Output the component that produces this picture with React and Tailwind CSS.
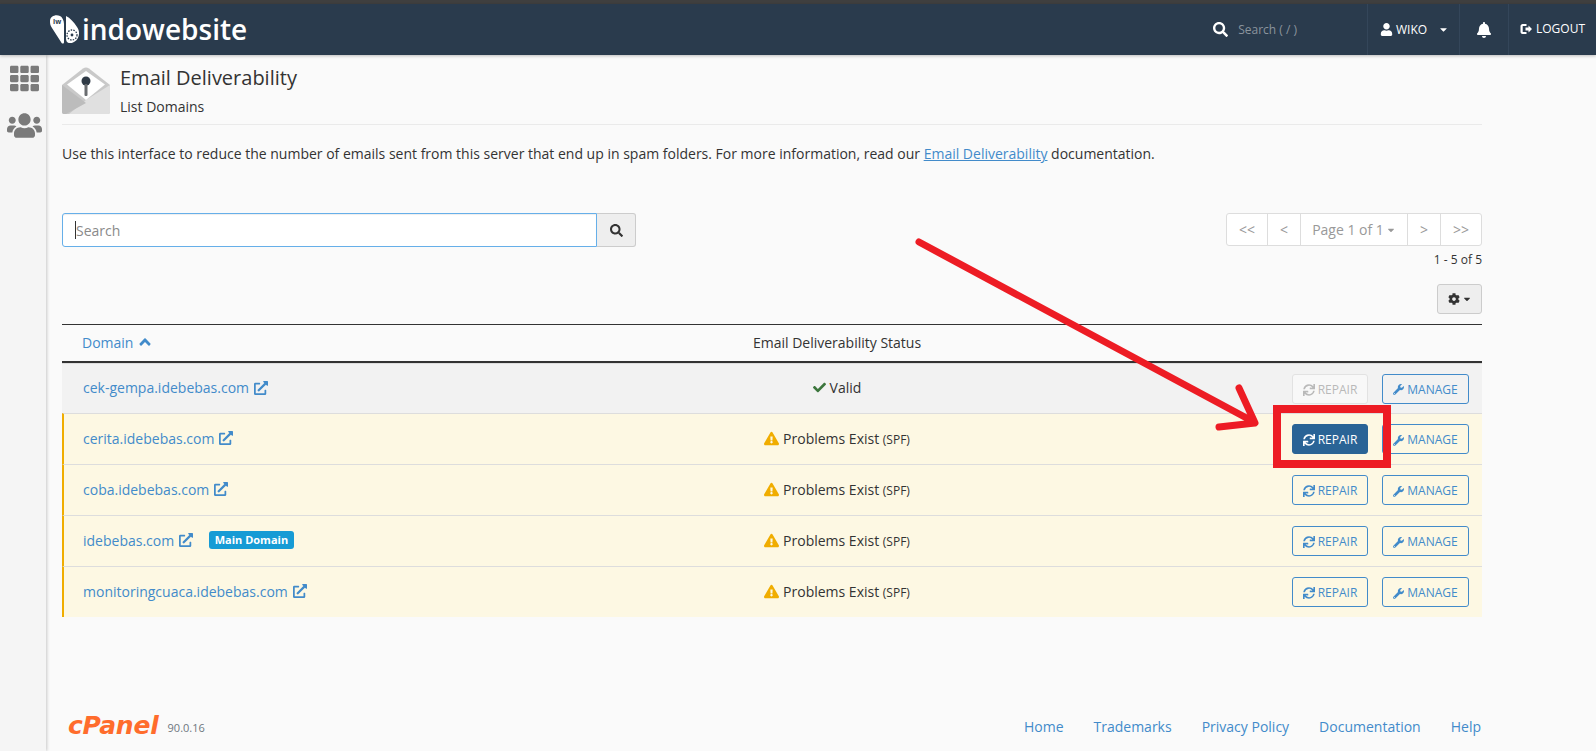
import React from "react";
import {
  FaBell,
  FaCheck,
  FaCog,
  FaExclamationTriangle,
  FaExternalLinkAlt,
  FaSearch,
  FaSync,
  FaTh,
  FaUser,
  FaUsers,
  FaWrench,
  FaAngleUp,
  FaCaretDown,
} from "react-icons/fa";

const rows = [
  { name: "cek-gempa.idebebas.com", valid: true, h: "h-[50px]" },
  { name: "cerita.idebebas.com", active: true, h: "h-[51px]" },
  { name: "coba.idebebas.com", h: "h-[51px]" },
  { name: "idebebas.com", main: true, h: "h-[51px]" },
  { name: "monitoringcuaca.idebebas.com", h: "h-[51px]" },
];

const pager = [
  { label: "<<", w: "w-[40px]" },
  { label: "<", w: "w-[33px]" },
  { label: "Page 1 of 1", w: "w-[107px]", caret: true },
  { label: ">", w: "w-[33px]" },
  { label: ">>", w: "w-[41px]" },
];

const footerLinks = ["Home", "Trademarks", "Privacy Policy", "Documentation", "Help"];

const LogoMark = () => (
  <svg width="32" height="32" viewBox="0 0 32 32" className="shrink-0">
    <path d="M1 7 C1 2 7 0 11 2 C13 3 15 6 15 10 L15 28 C15 30 13 30 12 28 L3 14 C1 11 1 9 1 7 Z" fill="#fff" />
    <path d="M17 2 C21 4 25 8 28 13 C33 20 28 29 21 29 C18 29 17 27 17 24 Z" fill="#fff" />
    <circle cx="23" cy="21" r="5" fill="none" stroke="#2a3b4d" strokeWidth="1.3" strokeDasharray="1.5 1.2" />
    <circle cx="23" cy="21" r="1.4" fill="#2a3b4d" />
    <text x="4" y="10" fontSize="7" fontFamily="'Open Sans', sans-serif" fill="#2a3b4d" fontWeight="700">iw</text>
  </svg>
);

const MailKey = () => (
  <svg width="48" height="48" viewBox="0 0 48 48" className="shrink-0">
    <path d="M0 18 L21 1.5 C23 0 25 0 27 1.5 L48 18 L48 45 C48 46.5 47 47 45.5 47 L2.5 47 C1 47 0 46.5 0 45 Z" fill="#c9c9c9" />
    <path d="M48 18 L48 45 C48 46.5 47 47 45.5 47 L7 47 L24 33 Z" fill="#e0e0e0" />
    <path d="M0 18 L24 36 L4 47 L2.5 47 C1 47 0 46.5 0 45 Z" fill="#bcbcbc" />
    <path d="M5 17.5 L24 4 L43 17.5 L24 33 Z" fill="#fff" />
    <circle cx="24" cy="14" r="4.5" fill="#2f3a46" />
    <rect x="22.5" y="17" width="3" height="12" rx="1" fill="#6a6d70" />
  </svg>
);

const Button = ({ icon, label, variant }) => {
  const styles = {
    outline: "border-[#428bca] text-[#428bca] bg-transparent",
    disabled: "border-[#e2e2e2] text-[#b9b9b9] bg-[#f8f8f8]",
    primary: "border-[#2a6496] text-white bg-[#2a6496]",
  };
  return (
    <button className={`flex h-[30px] items-center justify-center gap-[3px] rounded-[3px] border pt-[2px] text-[12px] ${styles[variant]} ${label === "REPAIR" ? "w-[76px]" : "w-[87px]"}`}>
      {icon}
      {label}
    </button>
  );
};

const App = () => {
  return (
    <div className="relative flex h-[751px] w-full flex-col overflow-hidden bg-[#fafafa] font-['Open_Sans',sans-serif] text-[14px] text-[#333]">
      {/* Top bar */}
      <div className="h-[4px] bg-[#3f3f3f]" />
      <header className="z-10 flex h-[51px] items-center bg-[#2a3b4d] text-white shadow-[0_1px_3px_rgba(0,0,0,0.25)]">
        <div className="ml-[49px] flex items-center gap-[1px]">
          <LogoMark />
          <span className="-mt-[1px] text-[28px] font-semibold leading-none">indowebsite</span>
        </div>
        <div className="ml-auto flex h-full items-center">
          <div className="flex items-center gap-[10px] pr-[70px]">
            <FaSearch className="text-[15px]" />
            <span className="text-[12px] text-[#8b949d]">Search ( / )</span>
          </div>
          <div className="flex h-full w-[92px] items-center gap-[3px] border-l border-[#34465a] pl-[12px] text-[12px]">
            <FaUser className="text-[13px]" />
            <span>WIKO</span>
            <FaCaretDown className="ml-[8px] text-[11px]" />
          </div>
          <div className="flex h-full w-[49px] items-center justify-center border-l border-[#34465a]">
            <FaBell className="text-[16px]" />
          </div>
          <div className="flex h-full w-[88px] items-center gap-[3px] border-l border-[#34465a] pb-[2px] pl-[10px] text-[12px]">
            <svg width="14" height="12" viewBox="0 0 13 12" className="shrink-0">
              <path d="M1 3 C1 2 2 1 3 1 L7 1 L7 3 L3.2 3 L3.2 9 L7 9 L7 11 L3 11 C2 11 1 10 1 9 Z" fill="#fff" />
              <path d="M6 4.5 L9 4.5 L9 2.5 L12.5 6 L9 9.5 L9 7.5 L6 7.5 Z" fill="#fff" />
            </svg>
            <span>LOGOUT</span>
          </div>
        </div>
      </header>

      <div className="flex min-h-0 flex-1">
        {/* Side rail */}
        <aside className="flex w-[46px] shrink-0 flex-col items-center gap-[15px] bg-[#f5f5f5] pl-[2px] pt-[9px] text-[#7a7a7a] shadow-[1px_0_3px_rgba(0,0,0,0.2)]">
          <FaTh className="text-[29px]" />
          <FaUsers className="text-[35px]" />
        </aside>

        {/* Main */}
        <main className="ml-[16px] flex w-[1420px] flex-col">
          <div className="flex h-[70px] gap-[10px] border-b border-[#eaeaea] pt-[12px]">
            <MailKey />
            <div className="-mt-[1px]">
              <h1 className="text-[20px] leading-[24px] text-[#333]">Email Deliverability</h1>
              <p className="mt-[7px] text-[14px] leading-[19px]">List Domains</p>
            </div>
          </div>
          <p className="mt-[19px] leading-[20px]">
            Use this interface to reduce the number of emails sent from this server that end up in spam folders. For more information, read our{" "}
            <span className="text-[#428bca] underline">Email Deliverability</span> documentation.
          </p>

          {/* Toolbar */}
          <div className="mt-[49px] flex items-start justify-between">
            <div className="flex h-[34px] w-[574px]">
              <div className="flex flex-1 items-center rounded-l-[3px] border border-[#66afe9] bg-white pl-[12px] text-[#8a8a8a] shadow-[inset_0_1px_1px_rgba(0,0,0,0.07)]">
                <span className="h-[18px] w-px bg-[#333]" />
                Search
              </div>
              <div className="flex w-[39px] items-center justify-center rounded-r-[3px] border border-l-0 border-[#ccc] bg-[#eee]">
                <FaSearch className="text-[13px] text-[#333]" />
              </div>
            </div>
            <div className="flex flex-col items-end">
              <div className="flex h-[33px] rounded-[3px] border border-[#ddd] bg-white text-[#999]">
                {pager.map((p, i) => (
                  <div key={p.label} className={`flex items-center justify-center gap-[2px] ${p.w} ${i > 0 ? "border-l border-[#ddd]" : ""}`}>
                    {p.label}
                    {p.caret && <FaCaretDown className="text-[10px]" />}
                  </div>
                ))}
              </div>
              <div className="mt-[5px] text-[12px] leading-[17px]">1 - 5 of 5</div>
              <div className="mt-[16px] flex h-[30px] w-[45px] items-center justify-center gap-[2px] rounded-[3px] border border-[#ccc] bg-[#eee]">
                <FaCog className="text-[12px]" />
                <FaCaretDown className="text-[10px]" />
              </div>
            </div>
          </div>

          {/* Table */}
          <div className="mt-[10px]">
            <div className="relative flex h-[39px] items-center border-y-2 border-t-[1px] border-[#333] bg-[#fafafa] pb-[2px]">
              <div className="flex w-[680px] items-center gap-[3px] pl-[20px] text-[#428bca]">
                Domain <FaAngleUp className="text-[18px]" />
              </div>
              <div className="w-[190px] text-center">Email Deliverability Status</div>
            </div>
            {rows.map((row) => (
              <div
                key={row.name}
                className={`relative flex items-center border-t border-[#ddd] first:border-t-0 ${row.h} ${row.valid ? "bg-[#f2f2f2]" : "border-l-2 border-l-[#f0ad00] bg-[#fdf8e3]"}`}
              >
                <div className={`flex flex-1 items-center gap-[5px] pb-[2px] text-[#428bca] ${row.valid ? "pl-[21px]" : "pl-[19px]"}`}>
                  {row.name}
                  <FaExternalLinkAlt className="text-[14px]" />
                  {row.main && (
                    <span className="ml-[11px] rounded-[3px] bg-[#169bd5] px-[5.5px] py-[1px] text-[11px] font-bold text-white">Main Domain</span>
                  )}
                </div>
                <div className={`absolute flex w-[310px] items-center justify-center gap-[4px] pb-[2px] ${row.valid ? "left-[620px]" : "left-[618px]"}`}>
                  {row.valid ? (
                    <>
                      <FaCheck className="text-[13px] text-[#3c763d]" />
                      Valid
                    </>
                  ) : (
                    <>
                      <FaExclamationTriangle className="text-[15px] text-[#f0ad00]" />
                      <span>
                        Problems Exist <span className="text-[12px]">(SPF)</span>
                      </span>
                    </>
                  )}
                </div>
                <div className="flex items-center gap-[14px] pr-[13px]">
                  <Button
                    icon={<FaSync className="text-[12px]" />}
                    label="REPAIR"
                    variant={row.valid ? "disabled" : row.active ? "primary" : "outline"}
                  />
                  <Button icon={<FaWrench className="text-[11px]" />} label="MANAGE" variant="outline" />
                </div>
              </div>
            ))}
          </div>

          {/* Footer */}
          <footer className="mt-auto flex items-center justify-between pb-[10px] pr-[1px]">
            <div className="flex items-center gap-[9px]">
              <span className="pl-[6px] font-['DejaVu_Sans',sans-serif] text-[25px] font-bold italic leading-[30px] tracking-[-0.2px] text-[#ff6c2c]">cPanel</span>
              <span className="mt-[4px] text-[11px] text-[#6e7780]">90.0.16</span>
            </div>
            <nav className="flex gap-[30px] text-[#428bca]">
              {footerLinks.map((l) => (
                <span key={l}>{l}</span>
              ))}
            </nav>
          </footer>
        </main>
      </div>

      {/* Annotation drawn over the page */}
      <svg className="pointer-events-none absolute left-0 top-0 z-20" width="1596" height="751">
        <path d="M919 242 L1254 422 M1239 388 L1255 423 L1219 427" fill="none" stroke="#ed1c24" strokeWidth="7" strokeLinecap="round" strokeLinejoin="round" />
      </svg>
      <div className="pointer-events-none absolute left-[1273px] top-[405px] z-20 h-[63px] w-[118px] border-[8px] border-[#ed1c24]" />
    </div>
  );
};

export default App;
